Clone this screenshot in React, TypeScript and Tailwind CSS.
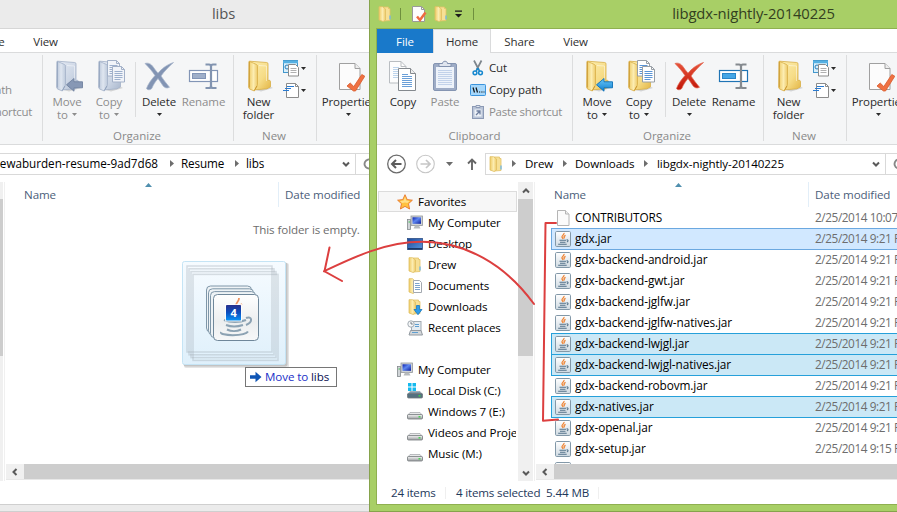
import type { ReactNode } from "react";
import { clsx } from "clsx";

function Defs() {
  return (
    <svg className="absolute h-0 w-0" aria-hidden="true">
      <defs>
        <linearGradient id="gold" x1="0" y1="0" x2="1" y2="1">
          <stop offset="0" stopColor="#fdeeb0" />
          <stop offset="0.6" stopColor="#f6dc86" />
          <stop offset="1" stopColor="#e3b544" />
        </linearGradient>
        <linearGradient id="goldSide" x1="0" y1="0" x2="1" y2="0">
          <stop offset="0" stopColor="#efcb66" />
          <stop offset="0.55" stopColor="#fcedb2" />
          <stop offset="1" stopColor="#edc967" />
        </linearGradient>
        <linearGradient id="steel" x1="0" y1="0" x2="1" y2="1">
          <stop offset="0" stopColor="#e6ebf4" />
          <stop offset="0.6" stopColor="#cbd5e4" />
          <stop offset="1" stopColor="#a9b7cd" />
        </linearGradient>
        <linearGradient id="steelSide" x1="0" y1="0" x2="1" y2="0">
          <stop offset="0" stopColor="#bac6d9" />
          <stop offset="0.5" stopColor="#dfe6f0" />
          <stop offset="1" stopColor="#bdc9db" />
        </linearGradient>
        <linearGradient id="blueArrow" x1="0" y1="0" x2="0" y2="1">
          <stop offset="0" stopColor="#6cc8f8" />
          <stop offset="1" stopColor="#0f7fd0" />
        </linearGradient>
        <linearGradient id="red" x1="0" y1="0" x2="0" y2="1">
          <stop offset="0" stopColor="#e8553c" />
          <stop offset="1" stopColor="#c11508" />
        </linearGradient>
        <linearGradient id="jar" x1="0" y1="0" x2="0" y2="1">
          <stop offset="0" stopColor="#ffffff" />
          <stop offset="1" stopColor="#cfdae2" />
        </linearGradient>
        <linearGradient id="screen" x1="0" y1="0" x2="1" y2="1">
          <stop offset="0" stopColor="#0a1fae" />
          <stop offset="0.45" stopColor="#5d86f0" />
          <stop offset="1" stopColor="#0b1d9c" />
        </linearGradient>
        <linearGradient id="desk" x1="0" y1="0" x2="1" y2="1">
          <stop offset="0" stopColor="#1c4b9c" />
          <stop offset="1" stopColor="#5a95dc" />
        </linearGradient>
        <linearGradient id="badge" x1="0" y1="0" x2="0" y2="1">
          <stop offset="0" stopColor="#28308c" />
          <stop offset="0.5" stopColor="#0b4fc0" />
          <stop offset="1" stopColor="#0a93f5" />
        </linearGradient>
        <linearGradient id="ghost" x1="0" y1="0" x2="0" y2="1">
          <stop offset="0" stopColor="#f6fbff" />
          <stop offset="1" stopColor="#dff0fb" />
        </linearGradient>
        <linearGradient id="tile" x1="0" y1="0" x2="0" y2="1">
          <stop offset="0" stopColor="#ffffff" />
          <stop offset="0.6" stopColor="#eceeef" />
          <stop offset="1" stopColor="#f7f8f9" />
        </linearGradient>
        <linearGradient id="disk" x1="0" y1="0" x2="0" y2="1">
          <stop offset="0" stopColor="#f4f4f4" />
          <stop offset="1" stopColor="#9a9da0" />
        </linearGradient>
      </defs>
    </svg>
  );
}

/* ---------- large ribbon icons (32 × 32) ---------- */

function Big({ children }: { children: ReactNode }) {
  return (
    <svg className="block h-8 w-8 shrink-0" viewBox="0 0 32 32" fill="none">
      {children}
    </svg>
  );
}

function FolderShape({ dim }: { dim?: boolean }) {
  const edge = dim ? "#a3b1c8" : "#d8ae48";
  return (
    <g>
      <path d="M9 29l17-3 4 2-12 3.500z" fill="#000" opacity="0.140" />
      <path
        d="M6.500 1.200l17.200 1.300c.9.100 1.300.5 1.300 1.400v16.600l1-.2c1 0 1.500.5 1.500 1.500v5l-3.500 2-14 1.200z"
        fill={dim ? "url(#steel)" : "url(#gold)"}
        stroke={edge}
        strokeWidth="0.8"
      />
      <path
        d="M6 1.200l7.500 3.300c.8.4 1 .9 1 1.700v18c0 .8-.2 1.300-.6 2L11.300 31 7 29.200c-.8-.4-1.300-1-1.300-2z"
        fill={dim ? "url(#steelSide)" : "url(#goldSide)"}
        stroke={edge}
        strokeWidth="0.8"
      />
      <path d="M6.300 2v25.500M11.300 30.500l2.600-4.500" stroke={dim ? "#8fa0bb" : "#c9952c"} strokeWidth="0.9" />
      <path d="M16 5.500l7.500.5v15" stroke="#fff" opacity="0.450" />
    </g>
  );
}

function NewFolderIcon() {
  return (
    <Big>
      <FolderShape />
    </Big>
  );
}

function MoveIcon({ dim }: { dim?: boolean }) {
  return (
    <Big>
      <FolderShape dim={dim} />
      <path
        d="M15.500 24.800l7.500-6.300v3.300h8.500v6h-8.500v3.400z"
        fill={dim ? "#8798b5" : "url(#blueArrow)"}
        stroke={dim ? "#71829f" : "#0c6fb8"}
        strokeWidth="0.9"
      />
    </Big>
  );
}

function Sheet({ x, y, dim }: { x: number; y: number; dim?: boolean }) {
  const line = dim ? "#9db0cd" : "#5b95d6";
  const edge = dim ? "#a3b1c8" : "#989fa6";
  return (
    <g transform={`translate(${x} ${y})`}>
      <path d="M.5.5h9l3 3v12.500h-12z" fill={dim ? "#f1f4f9" : "#fff"} stroke={edge} />
      <path d="M9.500.5v3h3" stroke={edge} />
      <path d="M2.500 5.500h8M2.500 7.500h8M2.500 9.500h8M2.500 11.500h8M2.500 13.500h6" stroke={line} />
    </g>
  );
}

function CopyToIcon({ dim }: { dim?: boolean }) {
  return (
    <Big>
      <FolderShape dim={dim} />
      <Sheet x={14} y={0} dim={dim} />
      <Sheet x={19} y={6} dim={dim} />
    </Big>
  );
}

function CopyIcon() {
  return (
    <Big>
      <path d="M2.500 1.500h11.500l5 5v16.500h-16.500z" fill="#fdfdfd" stroke="#b9bdc1" />
      <path d="M14 1.500v5h5" stroke="#b9bdc1" />
      <path d="M6 7.500h6M6 9.500h8M6 11.500h8M6 13.500h8M6 15.500h8M6 17.500h8" stroke="#bdd4ec" />
      <path d="M11.500 8.500h12l5 5v17h-17z" fill="#fff" stroke="#84898e" />
      <path d="M23.500 8.500v5h5" fill="#eee" stroke="#84898e" />
      <path d="M15 14.500h6M15 16.500h10M15 18.500h10M15 20.500h10M15 22.500h10M15 24.500h10M15 26.500h10" stroke="#6a9fd8" />
    </Big>
  );
}

function PasteIcon() {
  return (
    <Big>
      <rect x="4.500" y="3.500" width="23" height="27" rx="1.500" fill="#9eacc6" stroke="#8595b2" />
      <rect x="7" y="7" width="18" height="21" fill="#eef3fa" />
      <path d="M9 10.500h14M9 12.500h14M9 14.500h14M9 16.500h14M9 18.500h14M9 20.500h14M9 22.500h14M9 24.500h14" stroke="#c2d2ea" />
      <path d="M10 6.500v-3h3.500c0-3 5-3 5 0H22v3z" fill="#dfe5ef" stroke="#8191ae" />
    </Big>
  );
}

function DeleteIcon({ dim }: { dim?: boolean }) {
  return (
    <Big>
      <path
        d="M2 3.500c3-1 6 .2 8 3.200 1.500 2.200 3 4.300 5 6.500C18.500 9 23 5 30.500 2.500 26 6.500 21.500 11 18 16c2.500 4 5.500 7.500 8.500 11.300-2.500 1.200-5 .8-6.700-1.800-1.600-2.500-3-4.700-4.800-7-3 3.500-4.800 6.500-6 9.500-1 2.200-4.500 2.200-5.500.5C5 24 8.500 19.500 12 15.500 9 11 6 7.500 2 3.500z"
        fill={dim ? "#8294b3" : "url(#red)"}
        stroke={dim ? "#a4b1c8" : "#e0614c"}
        strokeWidth="0.700"
      />
    </Big>
  );
}

function RenameIcon({ dim }: { dim?: boolean }) {
  return (
    <Big>
      <rect x="1.500" y="10.500" width="28" height="11" fill="#fff" stroke={dim ? "#8295b6" : "#1f74b5"} strokeWidth="1.200" />
      <rect x="4.500" y="13.500" width="13" height="5" fill={dim ? "#9fafc9" : "#45a6e6"} stroke={dim ? "#8295b6" : "#2a85c8"} />
      <path
        d="M17.500 4.500h3.500c1.500 0 2 .6 2 2v19.500c0 1.400-.5 2-2 2h-3.500M28.500 4.500H25c-1.500 0-2 .6-2 2v19.500c0 1.400.5 2 2 2h3.500"
        stroke={dim ? "#8294b0" : "#858a8f"}
        strokeWidth="2.200"
      />
    </Big>
  );
}

function PropertiesIcon() {
  return (
    <Big>
      <path d="M6.500 3.500h15.500l5 5v21h-20.500z" fill="#fcfcfc" stroke="#a0a0a0" />
      <path d="M22 3.500v5h5" fill="#eee" stroke="#a0a0a0" />
      <path d="M14 26l3.200-3 3.600 3.500 8-12 3 1.700-9.300 14.800h-2z" fill="#ef7142" stroke="#d85a2c" strokeWidth="0.800" />
    </Big>
  );
}

/* ---------- small icons (16 × 16) ---------- */

function Small({ children }: { children: ReactNode }) {
  return (
    <svg className="block h-4 w-4 shrink-0" viewBox="0 0 16 16" fill="none">
      {children}
    </svg>
  );
}

function CutIcon() {
  return (
    <Small>
      <path d="M4 .5l5 9.500M11.500.5L6.500 10" stroke="#7d858c" strokeWidth="1.700" />
      <circle cx="5" cy="12.800" r="1.900" stroke="#1688cf" strokeWidth="1.500" />
      <circle cx="10.500" cy="12.800" r="1.900" stroke="#1688cf" strokeWidth="1.500" />
      <path d="M7.800 8l1.700 3.200M7.800 8l-1.700 3.200" stroke="#1688cf" strokeWidth="1.500" />
    </Small>
  );
}

function CopyPathIcon() {
  return (
    <Small>
      <rect x="0.500" y="2.500" width="15" height="11" rx="0.800" fill="#a5d7fb" stroke="#3a93dc" />
      <path d="M3 5.500l1.500 5M6 5.500l1.500 5" stroke="#111" strokeWidth="1.200" />
      <path d="M9 10h1.200M11.300 10h1.200M13.500 10h1" stroke="#111" strokeWidth="1.200" />
    </Small>
  );
}

function PasteShortcutIcon() {
  return (
    <Small>
      <rect x="2.500" y="2.500" width="11" height="12" fill="#b9c4d7" stroke="#8c9ab5" />
      <rect x="4.500" y="5.500" width="7" height="7" fill="#eef2f8" />
      <path d="M6 1.500h4v2H6z" fill="#dfe5ee" stroke="#8c9ab5" />
      <path d="M6 11l3.500-3.500M6.500 7h3.500v3.500" stroke="#6d7e9e" strokeWidth="1.300" />
    </Small>
  );
}

function NewItemIcon() {
  return (
    <svg className="block h-[17px] w-[17px] shrink-0" viewBox="0 0 17 17" fill="none">
      <rect x="0.500" y="0.500" width="14" height="12" fill="#d9effb" stroke="#4297cc" />
      <path d="M0 2h15" stroke="#55b0e2" strokeWidth="2.500" />
      <circle cx="4" cy="7" r="2" stroke="#2b7db8" />
      <path d="M5.500 4.500h7l3 3v8.500h-10z" fill="#fff" stroke="#8b8b8b" />
      <path d="M7.500 8.500h6M7.500 10.500h6M7.500 12.500h6" stroke="#b0b0b0" />
    </svg>
  );
}

function EasyAccessIcon() {
  return (
    <svg className="block h-[17px] w-[17px] shrink-0" viewBox="0 0 17 17" fill="none">
      <path d="M3.500 1.500h9l3 3v11h-12z" fill="#fff" stroke="#8b8b8b" />
      <path d="M12.500 1.500v3h3" stroke="#8b8b8b" />
      <path d="M4 4.500h7M2 6.500h6M0 8.500h6" stroke="#2b7bd0" strokeWidth="1.200" />
    </svg>
  );
}

function FolderSmall() {
  return (
    <Small>
      <path d="M6 1h5.500v1.500h1.500v12l-7 .5z" fill="#f7e095" stroke="#e2c268" strokeWidth="0.800" />
      <path d="M2 .7h3.500l3 2.300v11l-2.300 1.500L2 14z" fill="url(#goldSide)" stroke="#e0bf62" strokeWidth="0.800" />
      <path d="M13 9.500v4" stroke="#6db8ea" strokeWidth="1.300" />
    </Small>
  );
}

function DocsIcon() {
  return (
    <Small>
      <path d="M2 .7h3.500l2.500 2.300v11l-1.800 1.500L2 14z" fill="url(#goldSide)" stroke="#e0bf62" strokeWidth="0.800" />
      <path d="M6.500 2.500h6l2 2v10h-8z" fill="#fff" stroke="#a3a9b0" />
      <path d="M8 5.500h4.500M8 7.500h5M8 9.500h5M8 11.500h5" stroke="#7ba3cd" />
    </Small>
  );
}

function DownloadsIcon() {
  return (
    <Small>
      <path d="M6 1h5.500v1.500h1.500v12l-7 .5z" fill="#f7e095" stroke="#e2c268" strokeWidth="0.800" />
      <path d="M2 .7h3.500l3 2.300v11l-2.300 1.500L2 14z" fill="url(#goldSide)" stroke="#e0bf62" strokeWidth="0.800" />
      <path d="M9.500 6.500h3v4H15L11 15.700 7 10.500h2.500z" fill="#2f9be8" stroke="#1679c2" strokeWidth="0.800" />
    </Small>
  );
}

function RecentIcon() {
  return (
    <Small>
      <rect x="4.500" y="1.500" width="9.500" height="9" fill="#e4ecf2" stroke="#a1aab1" />
      <path d="M3.500 10.500h10.500l1.500 4.500h-13.500z" fill="#d3d7da" stroke="#9299a0" />
      <path d="M8 4.500h4M8 6.500h4M5 12.500h6" stroke="#5f9fd0" />
      <circle cx="4" cy="4" r="3.200" fill="#f4f6f7" stroke="#a3abb2" />
      <path d="M4 2v2h1.800" stroke="#55626d" strokeWidth="0.800" />
    </Small>
  );
}

function StarIcon() {
  return (
    <Small>
      <path
        d="M8 .7l2.200 4.900 5.200.6-3.900 3.500 1.100 5.300L8 12.400 3.400 15l1.100-5.300L.6 6.200l5.200-.6z"
        fill="#ffc13e"
        stroke="#e8762c"
        strokeWidth="0.900"
      />
      <path d="M8 2.800l1.300 3.600 3.500.5-2.500 2.200L8 8.500 5 9l-2-2 3.700-.5z" fill="#ffe08a" />
    </Small>
  );
}

function ComputerIcon() {
  return (
    <Small>
      <rect x="0.500" y="4.500" width="3" height="10" fill="#d0d4d7" stroke="#83898d" strokeWidth="0.800" />
      <path d="M1.500 7h1.500" stroke="#3fbf50" />
      <rect x="4" y="1" width="11.500" height="9.500" fill="#cfd3d6" stroke="#92979b" strokeWidth="0.800" />
      <rect x="5.500" y="2.300" width="8.500" height="6.500" fill="url(#screen)" />
      <path d="M8 10.500h4l1.500 3h-7z" fill="#b7bbbe" />
    </Small>
  );
}

function DesktopIcon() {
  return (
    <Small>
      <rect x="0.500" y="2.500" width="15" height="11" fill="url(#desk)" stroke="#2d4f86" strokeWidth="0.800" />
      <path d="M1 12.800h14" stroke="#16325f" strokeWidth="1.400" />
    </Small>
  );
}

function DriveIcon({ system }: { system?: boolean }) {
  return (
    <Small>
      {system && <path d="M1 0h3.500v3.500H1zM5.500 0H9v3.500H5.500zM1 4.500h3.500V8H1zM5.500 4.500H9V8H5.500z" fill="#14b9ee" />}
      <path d="M3 8.500h10l2.500 3H.5z" fill={system ? "#7d97a8" : "#e8e9ea"} stroke="#a0a4a7" strokeWidth="0.700" />
      <rect x="0.500" y="10.500" width="15" height="4.500" rx="1" fill={system ? "#54707f" : "url(#disk)"} stroke="#73787c" strokeWidth="0.800" />
      <path d="M11.500 12.800h2" stroke="#3fd24a" strokeWidth="1.400" />
    </Small>
  );
}

function BlankFileIcon() {
  return (
    <Small>
      <path d="M2.500.5h8l3.500 3.500v11.500h-11.500z" fill="#fbfbfb" stroke="#b5b5b5" />
      <path d="M10.500.5v3.500h3.500" fill="#eee" stroke="#b5b5b5" />
    </Small>
  );
}

function JarIcon() {
  return (
    <Small>
      <rect x="0.500" y="0.500" width="15" height="15" rx="1.200" fill="url(#jar)" stroke="#8298a8" />
      <path d="M9 2c.6 1.700-2.600 2.500-2 4.200L8.200 8M10.600 4.300C9 5 8.600 5.800 9.500 7.400" stroke="#ee8434" strokeWidth="1.300" />
      <path d="M4.500 9.300h6.500M5 11.300h5.500M3.200 13.300h8.500M11.500 9c2-.5 2 1.500.3 2" stroke="#537289" strokeWidth="1.100" />
    </Small>
  );
}

function CheckSheetSmall() {
  return (
    <Small>
      <path d="M1.500.5h9l3 3v12h-12z" fill="#fdfdfd" stroke="#9a9a9a" />
      <path d="M10.500.5v3h3" stroke="#9a9a9a" />
      <path d="M6 10.500l3 3.500 5.500-7.500" stroke="#ee6b40" strokeWidth="2.500" />
    </Small>
  );
}

function Caret({ className }: { className?: string }) {
  return (
    <svg className={clsx("block h-[3px] w-[5px] shrink-0", className)} viewBox="0 0 5 3">
      <path d="M0 0h5L2.500 3z" fill="currentColor" />
    </svg>
  );
}

function Crumb() {
  return (
    <svg className="block h-[7px] w-1 shrink-0 text-[#6d6d6d]" viewBox="0 0 4 7">
      <path d="M0 0l4 3.500L0 7z" fill="currentColor" />
    </svg>
  );
}

function Chevron({ className }: { className?: string }) {
  return (
    <svg className={clsx("block h-2 w-2 shrink-0 text-[#5a5a5a]", className)} viewBox="0 0 8 8" fill="none">
      <path d="M1 2.500l3 3 3-3" stroke="currentColor" strokeWidth="2" />
    </svg>
  );
}

/* ---------- ribbon ---------- */

function BigButton({
  icon,
  lines,
  dim,
  drop,
  className,
}: {
  icon: ReactNode;
  lines: string[];
  dim?: boolean;
  drop?: "inline" | "below";
  className: string;
}) {
  return (
    <div className={clsx("flex shrink-0 flex-col items-center", dim ? "text-[#8d8d8d]" : "text-[#2b2b2b]", className)}>
      {icon}
      <div className="mt-[3px] flex flex-col items-center whitespace-nowrap text-[11.500px] leading-[13px]">
        <span>{lines[0]}</span>
        {lines[1] && (
          <span className="flex items-center gap-1">
            {lines[1]}
            {drop === "inline" && <Caret />}
          </span>
        )}
        {drop === "below" && <Caret className="mt-[5px]" />}
      </div>
    </div>
  );
}

function Group({ label, className, children }: { label: string; className: string; children: ReactNode }) {
  return (
    <div className={clsx("mt-[7px] flex shrink-0 flex-col", className)}>
      <div className="flex h-[65px] items-start">{children}</div>
      <div className="mt-[3px] text-center text-[11.500px] leading-4 tracking-normal text-[#8a8a8a]">{label}</div>
    </div>
  );
}

function GroupLine() {
  return <div className="mt-0.5 h-[86px] w-px shrink-0 bg-[#dcddde]" />;
}

function Ribbon({ inactive }: { inactive?: boolean }) {
  const d = inactive;
  return (
    <div className="flex h-[93px] shrink-0 overflow-hidden border-y border-[#dadbdc] bg-[#f5f6f7]">
      <Group label="Clipboard" className="w-[195px]">
        <div className="flex pl-[5px]">
          <BigButton className="w-[42px]" icon={<CopyIcon />} lines={["Copy"]} dim={d} />
          <BigButton className="w-[42px]" icon={<PasteIcon />} lines={["Paste"]} dim />
          <div className="-mt-[3px] ml-1 flex flex-col text-[11.500px] tracking-[-0.170px]">
            <div className="flex h-[22px] items-center gap-[3px] text-[#2b2b2b]"><CutIcon />Cut</div>
            <div className={clsx("flex h-[22px] items-center gap-[3px]", d ? "text-[#8d8d8d]" : "text-[#2b2b2b]")}>
              <CopyPathIcon />Copy path
            </div>
            <div className="flex h-[22px] items-center gap-[3px] whitespace-nowrap tracking-[-0.300px] text-[#8d8d8d]">
              <PasteShortcutIcon />Paste shortcut
            </div>
          </div>
        </div>
      </Group>
      <GroupLine />
      <Group label="Organize" className="w-[190px] pr-0.5">
        <BigButton className="ml-[3px] w-[42px]" icon={<MoveIcon dim={d} />} lines={["Move", "to"]} drop="inline" dim={d} />
        <BigButton className="w-[42px]" icon={<CopyToIcon dim={d} />} lines={["Copy", "to"]} drop="inline" dim={d} />
        <div className="ml-[5px] mt-0.5 h-[55px] w-px shrink-0 bg-[#dcddde]" />
        <BigButton className="ml-px w-[44px]" icon={<DeleteIcon dim={d} />} lines={["Delete"]} drop="below" />
        <BigButton className="w-[45px]" icon={<RenameIcon dim={d} />} lines={["Rename"]} dim={d} />
      </Group>
      <GroupLine />
      <Group label="New" className="w-[82px] pr-0.5">
        <BigButton className="ml-[3px] w-[43px]" icon={<NewFolderIcon />} lines={["New", "folder"]} />
        <div className="ml-[3px] flex flex-col gap-[5px] text-[#2b2b2b]">
          <div className="flex items-center gap-px"><NewItemIcon /><Caret /></div>
          <div className="flex items-center gap-px"><EasyAccessIcon /><Caret /></div>
        </div>
      </Group>
      <GroupLine />
      <Group label="Open" className="w-[130px] pl-3">
        <BigButton className="-ml-2.5 w-[60px]" icon={<PropertiesIcon />} lines={["Properties"]} drop="below" />
      </Group>
    </div>
  );
}

/* ---------- window chrome ---------- */

function Tabs() {
  return (
    <div className="relative z-10 -mb-px flex h-6 shrink-0 text-[11.500px] leading-6 text-[#2f2f2f]">
      <div className="w-14 bg-[#1979ca] text-center leading-[25px] text-white">File</div>
      <div className="w-[58px] border-x border-t border-[#dadbdc] bg-[#f5f6f7] text-center">Home</div>
      <div className="w-[57px] text-center leading-[26px]">Share</div>
      <div className="w-[55px] text-center leading-[26px]">View</div>
    </div>
  );
}

function QuickAccess() {
  return (
    <div className="flex h-full w-[100px] items-center">
      <FolderSmall />
      <div className="ml-[7px] h-3 w-px bg-[#6f8f3e]" />
      <div className="ml-2.5"><CheckSheetSmall /></div>
      <div className="ml-1.5"><FolderSmall /></div>
      <svg className="ml-1.5 block h-2 w-[7px]" viewBox="0 0 7 8">
        <path d="M0 .5h7v1.300H0zM0 4h7L3.500 7.500z" fill="#1b1b1b" />
      </svg>
      <div className="ml-[11px] h-3 w-px bg-[#6f8f3e]" />
    </div>
  );
}

function RefreshIcon() {
  return (
    <svg className="block h-3 w-3 shrink-0" viewBox="0 0 12 12" fill="none">
      <path d="M10.500 7.500A4.600 4.600 0 1 1 8.500 2M8 0v3.500h3.500" stroke="#888" strokeWidth="1.900" />
    </svg>
  );
}

const files = [
  { name: "CONTRIBUTORS", time: "2/25/2014 10:07 AM", state: "" },
  { name: "gdx.jar", time: "2/25/2014 9:21 PM", state: "focus" },
  { name: "gdx-backend-android.jar", time: "2/25/2014 9:21 PM", state: "" },
  { name: "gdx-backend-gwt.jar", time: "2/25/2014 9:21 PM", state: "" },
  { name: "gdx-backend-jglfw.jar", time: "2/25/2014 9:21 PM", state: "" },
  { name: "gdx-backend-jglfw-natives.jar", time: "2/25/2014 9:21 PM", state: "" },
  { name: "gdx-backend-lwjgl.jar", time: "2/25/2014 9:21 PM", state: "sel" },
  { name: "gdx-backend-lwjgl-natives.jar", time: "2/25/2014 9:21 PM", state: "sel" },
  { name: "gdx-backend-robovm.jar", time: "2/25/2014 9:21 PM", state: "" },
  { name: "gdx-natives.jar", time: "2/25/2014 9:21 PM", state: "sel" },
  { name: "gdx-openal.jar", time: "2/25/2014 9:21 PM", state: "" },
  { name: "gdx-setup.jar", time: "2/25/2014 9:15 PM", state: "" },
];

function FileList() {
  return (
    <div className="flex flex-col pl-[15px]">
      {files.map((f) => (
        <div
          key={f.name}
          className={clsx(
            "-mb-px flex h-[22px] shrink-0 items-center whitespace-nowrap border pl-[3px] text-[11.800px]",
            f.state === "focus" && "border-[#6ba8e0] bg-[#d1e8ff]",
            f.state === "sel" && "border-[#26a0da] bg-[#cbe8f6]",
            f.state === "" && "border-transparent",
          )}
        >
          {f.name === "CONTRIBUTORS" ? <BlankFileIcon /> : <JarIcon />}
          <span className="ml-1 w-[240px] shrink-0 tracking-[-0.100px] text-black">{f.name}</span>
          <span className="tracking-[-0.420px] text-[#6d6d6d]">{f.time}</span>
        </div>
      ))}
      <div className="flex h-[22px] items-center pl-1"><JarIcon /></div>
    </div>
  );
}

const nav: { label: string; icon: ReactNode; root?: boolean; boxed?: boolean }[] = [
  { label: "Favorites", icon: <StarIcon />, root: true, boxed: true },
  { label: "My Computer", icon: <ComputerIcon /> },
  { label: "Desktop", icon: <DesktopIcon /> },
  { label: "Drew", icon: <FolderSmall /> },
  { label: "Documents", icon: <DocsIcon /> },
  { label: "Downloads", icon: <DownloadsIcon /> },
  { label: "Recent places", icon: <RecentIcon /> },
  { label: "", icon: null },
  { label: "My Computer", icon: <ComputerIcon />, root: true },
  { label: "Local Disk (C:)", icon: <DriveIcon system /> },
  { label: "Windows 7 (E:)", icon: <DriveIcon /> },
  { label: "Videos and Projects", icon: <DriveIcon /> },
  { label: "Music (M:)", icon: <DriveIcon /> },
];

function NavPane({ hidden }: { hidden?: boolean }) {
  return (
    <div className="flex h-[299px] w-[158px] shrink-0 border-r border-[#f0f0f0]">
      <div className="w-[141px] overflow-hidden px-px pt-[9px]">
        {!hidden &&
          nav.map((n, i) => (
            <div
              key={i}
              className={clsx(
                "flex h-[21px] items-center gap-[5px] overflow-hidden whitespace-nowrap border text-[11.600px] text-black",
                n.root ? "pl-[18px]" : "pl-7",
                n.boxed ? "border-[#dcdcdc] bg-[#f7f7f7]" : "border-transparent",
              )}
            >
              {n.icon}
              <span>{n.label}</span>
            </div>
          ))}
      </div>
      <div className="flex w-[15px] flex-col items-center bg-[#f0f0f0]">
        <div className="flex h-[17px] items-center"><Chevron className="rotate-180" /></div>
        <div className="h-[157px] w-full bg-[#cdcdcd]" />
        <div className="mt-auto flex h-[17px] items-center"><Chevron /></div>
      </div>
    </div>
  );
}

function Explorer({ inactive, title, crumbs, status, children }: {
  inactive?: boolean;
  title: string;
  crumbs: ReactNode;
  status?: ReactNode;
  children: ReactNode;
}) {
  return (
    <div className={clsx("flex w-[752px] shrink-0 flex-col", inactive && "-ml-[153px]")}>
      <div className={clsx("flex h-[29px] shrink-0 border-b", inactive ? "border-[#d6d6d6] bg-[#ebebeb]" : "border-[#8fb050] bg-[#a8cf66]")}>
        {inactive ? <div className="w-[100px]" /> : <QuickAccess />}
        <div className={clsx("w-[553px] text-center text-[14.800px] leading-[27px]", inactive ? "text-[#555]" : "text-[#33401f]")}>{title}</div>
      </div>
      <Tabs />
      <Ribbon inactive={inactive} />
      {crumbs}
      <div className="flex h-[299px] shrink-0">
        <NavPane hidden={inactive} />
        <div className="flex w-[594px] flex-col pl-px">
          <div className="flex h-[25px] shrink-0 text-[11.600px] leading-[25px] text-[#4c607a]">
            <div className="relative w-[273px] border-r border-[#e2eef8] pl-[18px]">
              Name
              <svg className="absolute left-[139px] top-px h-1 w-[7px]" viewBox="0 0 7 4">
                <path d="M0 4h7L3.500 0z" fill="#4f8fae" />
              </svg>
            </div>
            <div className="pl-1.5">Date modified</div>
          </div>
          <div className="h-[257px] overflow-hidden">{children}</div>
          <div className="flex h-4 shrink-0 border-b border-[#e8e8e8] bg-[#f0f0f0]">
            <div className="flex w-[18px] items-center justify-center"><Chevron className="rotate-90" /></div>
            <div className="flex-1 bg-[#cdcdcd]" />
          </div>
        </div>
      </div>
      <div className="flex h-[23px] shrink-0 items-center text-[11.600px] text-[#1e395b]">{status}</div>
    </div>
  );
}

function LeftAddress() {
  return (
    <div className="flex h-[37px] shrink-0 items-center pl-[143px]">
      <div className="flex h-[22px] w-[366px] shrink-0 items-center border border-[#d9d9d9] text-[11.700px]">
        <div className="flex w-[167px] shrink-0 justify-end whitespace-nowrap tracking-[-0.020px]">drewaburden-resume-9ad7d68</div>
        <div className="ml-3"><Crumb /></div>
        <span className="ml-[7px] w-[54px]">Resume</span>
        <Crumb />
        <span className="ml-[7px] flex-1">libs</span>
        <Chevron className="mr-[5px]" />
      </div>
      <div className="-ml-px flex h-[22px] w-8 items-center border border-[#d9d9d9] pl-[7px]"><RefreshIcon /></div>
    </div>
  );
}

function RightAddress() {
  return (
    <div className="flex h-[37px] shrink-0 items-center">
      <svg className="ml-2.5 block h-5 w-5 shrink-0" viewBox="0 0 20 20" fill="none">
        <circle cx="9.500" cy="10" r="8.800" stroke="#6b6b6b" strokeWidth="1.300" />
        <path d="M14.500 10H5.500M9 6l-4 4 4 4" stroke="#5c5c5c" strokeWidth="2" />
      </svg>
      <svg className="ml-[9px] block h-5 w-5 shrink-0" viewBox="0 0 20 20" fill="none">
        <circle cx="9.500" cy="10" r="8.800" stroke="#c6c6c6" strokeWidth="1.100" />
        <path d="M4.500 10h9M10 6l4 4-4 4" stroke="#c6c6c6" strokeWidth="1.700" />
      </svg>
      <svg className="ml-2.5 block h-1 w-[7px] shrink-0" viewBox="0 0 7 4">
        <path d="M0 0h7L3.500 4z" fill="#6b6b6b" />
      </svg>
      <svg className="ml-[14px] block h-3 w-[10px] shrink-0" viewBox="0 0 10 12" fill="none">
        <path d="M5 12V1.500M1 5.500l4-4 4 4" stroke="#666" strokeWidth="1.900" />
      </svg>
      <div className="ml-2 flex h-[22px] w-[401px] shrink-0 items-center border border-[#d9d9d9] pl-0.5 text-[11.600px]">
        <FolderSmall />
        <div className="ml-2"><Crumb /></div>
        <span className="ml-[9px] w-[38px]">Drew</span>
        <Crumb />
        <span className="ml-2 w-[69px] tracking-[-0.120px]">Downloads</span>
        <Crumb />
        <span className="ml-[9px] flex-1">libgdx-nightly-20140225</span>
        <Chevron className="mr-[5px]" />
      </div>
      <div className="-ml-px flex h-[22px] w-8 items-center border border-[#d9d9d9] pl-[7px]"><RefreshIcon /></div>
    </div>
  );
}

/* Stack of dragged files with its count badge */
function DragGhost() {
  return (
    <svg className="absolute left-[180px] top-[258px] h-[112px] w-[112px]" viewBox="0 0 112 112" fill="none">
      <rect x="4" y="5" width="105" height="105" rx="2" fill="#000" opacity="0.100" />
      <rect x="3.500" y="4.500" width="104" height="104" rx="2" fill="#000" opacity="0.150" />
      <rect x="2.500" y="3.500" width="103" height="103" rx="2" fill="url(#ghost)" stroke="#c5e4f5" />
      {[0, 2, 4, 6].map((o) => (
        <rect key={o} x={7 + o} y={8 + o * 1.400} width="85" height="86" stroke="#a5b0b6" opacity="0.400" strokeWidth="1.500" />
      ))}
      {[0, 2, 4].map((o) => (
        <rect key={o} x={26.500 + o} y={28 + o * 1.400} width="45" height="46" rx="4" fill="#eef3f6" stroke="#7e96a8" />
      ))}
      <rect x="33.500" y="36.500" width="45" height="46" rx="4" fill="url(#tile)" stroke="#6f879a" />
      <path d="M59 40c.5 4-4.500 5-3 9M62 46c-2 1-3 2-2 4" stroke="#ee9461" strokeWidth="1.800" />
      <path
        d="M44 62c6 2.500 16 2.500 22 0M66 60c6-2.500 7.500 4 0 7M46 67c5 2 11 2 17 0M47 71.500c4 2 10 2 14 0M41 74c-2 4 24 4.500 27-.5"
        stroke="#8ca2b3"
        strokeWidth="2"
      />
      <rect x="45" y="46" width="17" height="17.500" fill="#fff" opacity="0.800" />
      <rect x="46" y="47" width="15" height="15.500" rx="0.800" fill="url(#badge)" />
      <text x="53.500" y="59" textAnchor="middle" fill="#fff" fontSize="11" fontWeight="700" fontFamily="Open Sans, sans-serif">4</text>
    </svg>
  );
}

export default function App() {
  return (
    <div className="relative flex h-[512px] w-[897px] overflow-hidden bg-white font-['Open_Sans','Noto_Sans',sans-serif] tracking-[-0.100px]">
      <Defs />
      <div className="flex h-[512px] w-[369px] shrink-0 flex-col overflow-hidden">
        <div className="flex h-[504px]">
          <Explorer inactive title="libs" crumbs={<LeftAddress />}>
            <div className="pl-[247px] pt-[15px] text-[11.600px] leading-4 text-[#6d6d6d]">This folder is empty.</div>
          </Explorer>
        </div>
        <div className="h-2 border-y border-[#cfcfcf] bg-[#ebebeb]" />
      </div>
      <div className="flex h-[512px] w-[528px] shrink-0 flex-col overflow-hidden border-b border-l border-[#86a34c] bg-[#a8cf66]">
        <div className="flex h-[504px] pl-[6px]">
          <div className="flex w-[521px] overflow-hidden">
            <div className="mt-[28px] w-px shrink-0 bg-[#8fb050]" />
            <div className="flex bg-white">
              <Explorer
                title="libgdx-nightly-20140225"
                crumbs={<RightAddress />}
                status={
                  <>
                    <span className="ml-3.5 w-[54px] whitespace-nowrap tracking-[-0.200px]">24 items</span>
                    <div className="h-3 w-px bg-[#efefef]" />
                    <span className="ml-2.5 w-[90px] whitespace-nowrap tracking-[-0.180px]">4 items selected</span>
                    <span className="w-[52px] whitespace-nowrap">5.44 MB</span>
                    <div className="h-3 w-px bg-[#efefef]" />
                  </>
                }
              >
                <FileList />
              </Explorer>
            </div>
          </div>
        </div>
        <div className="ml-[6px] h-px bg-[#8fb050]" />
      </div>
      <DragGhost />
      <div className="absolute left-[245px] top-[367px] flex h-5 w-[92px] items-center border border-[#767676] bg-white pl-1 text-[11.600px] text-[#1a2fc8]">
        <svg className="block h-3 w-3 shrink-0" viewBox="0 0 12 12">
          <path d="M0 4.300h5.500V.8L11.500 6l-6 5.200V7.700H0z" fill="#0f55b5" />
        </svg>
        <span className="ml-[3px] whitespace-nowrap">Move to <span className="text-[#0a1052]">libs</span></span>
      </div>
      <svg className="absolute left-0 top-0 h-[512px] w-[897px]" viewBox="0 0 897 512" fill="none" stroke="#dc3f3f" strokeWidth="2" strokeLinecap="round">
        <path d="M534 304C505 264 465 241.800 422 241.800c-37 0-70 16.200-98 29.500" />
        <path d="M329.500 247.500L324.500 271.300l17.500 9.700" />
        <path d="M556 223h-10.500L543 420.800l15-1.300" strokeLinejoin="round" />
      </svg>
    </div>
  );
}
